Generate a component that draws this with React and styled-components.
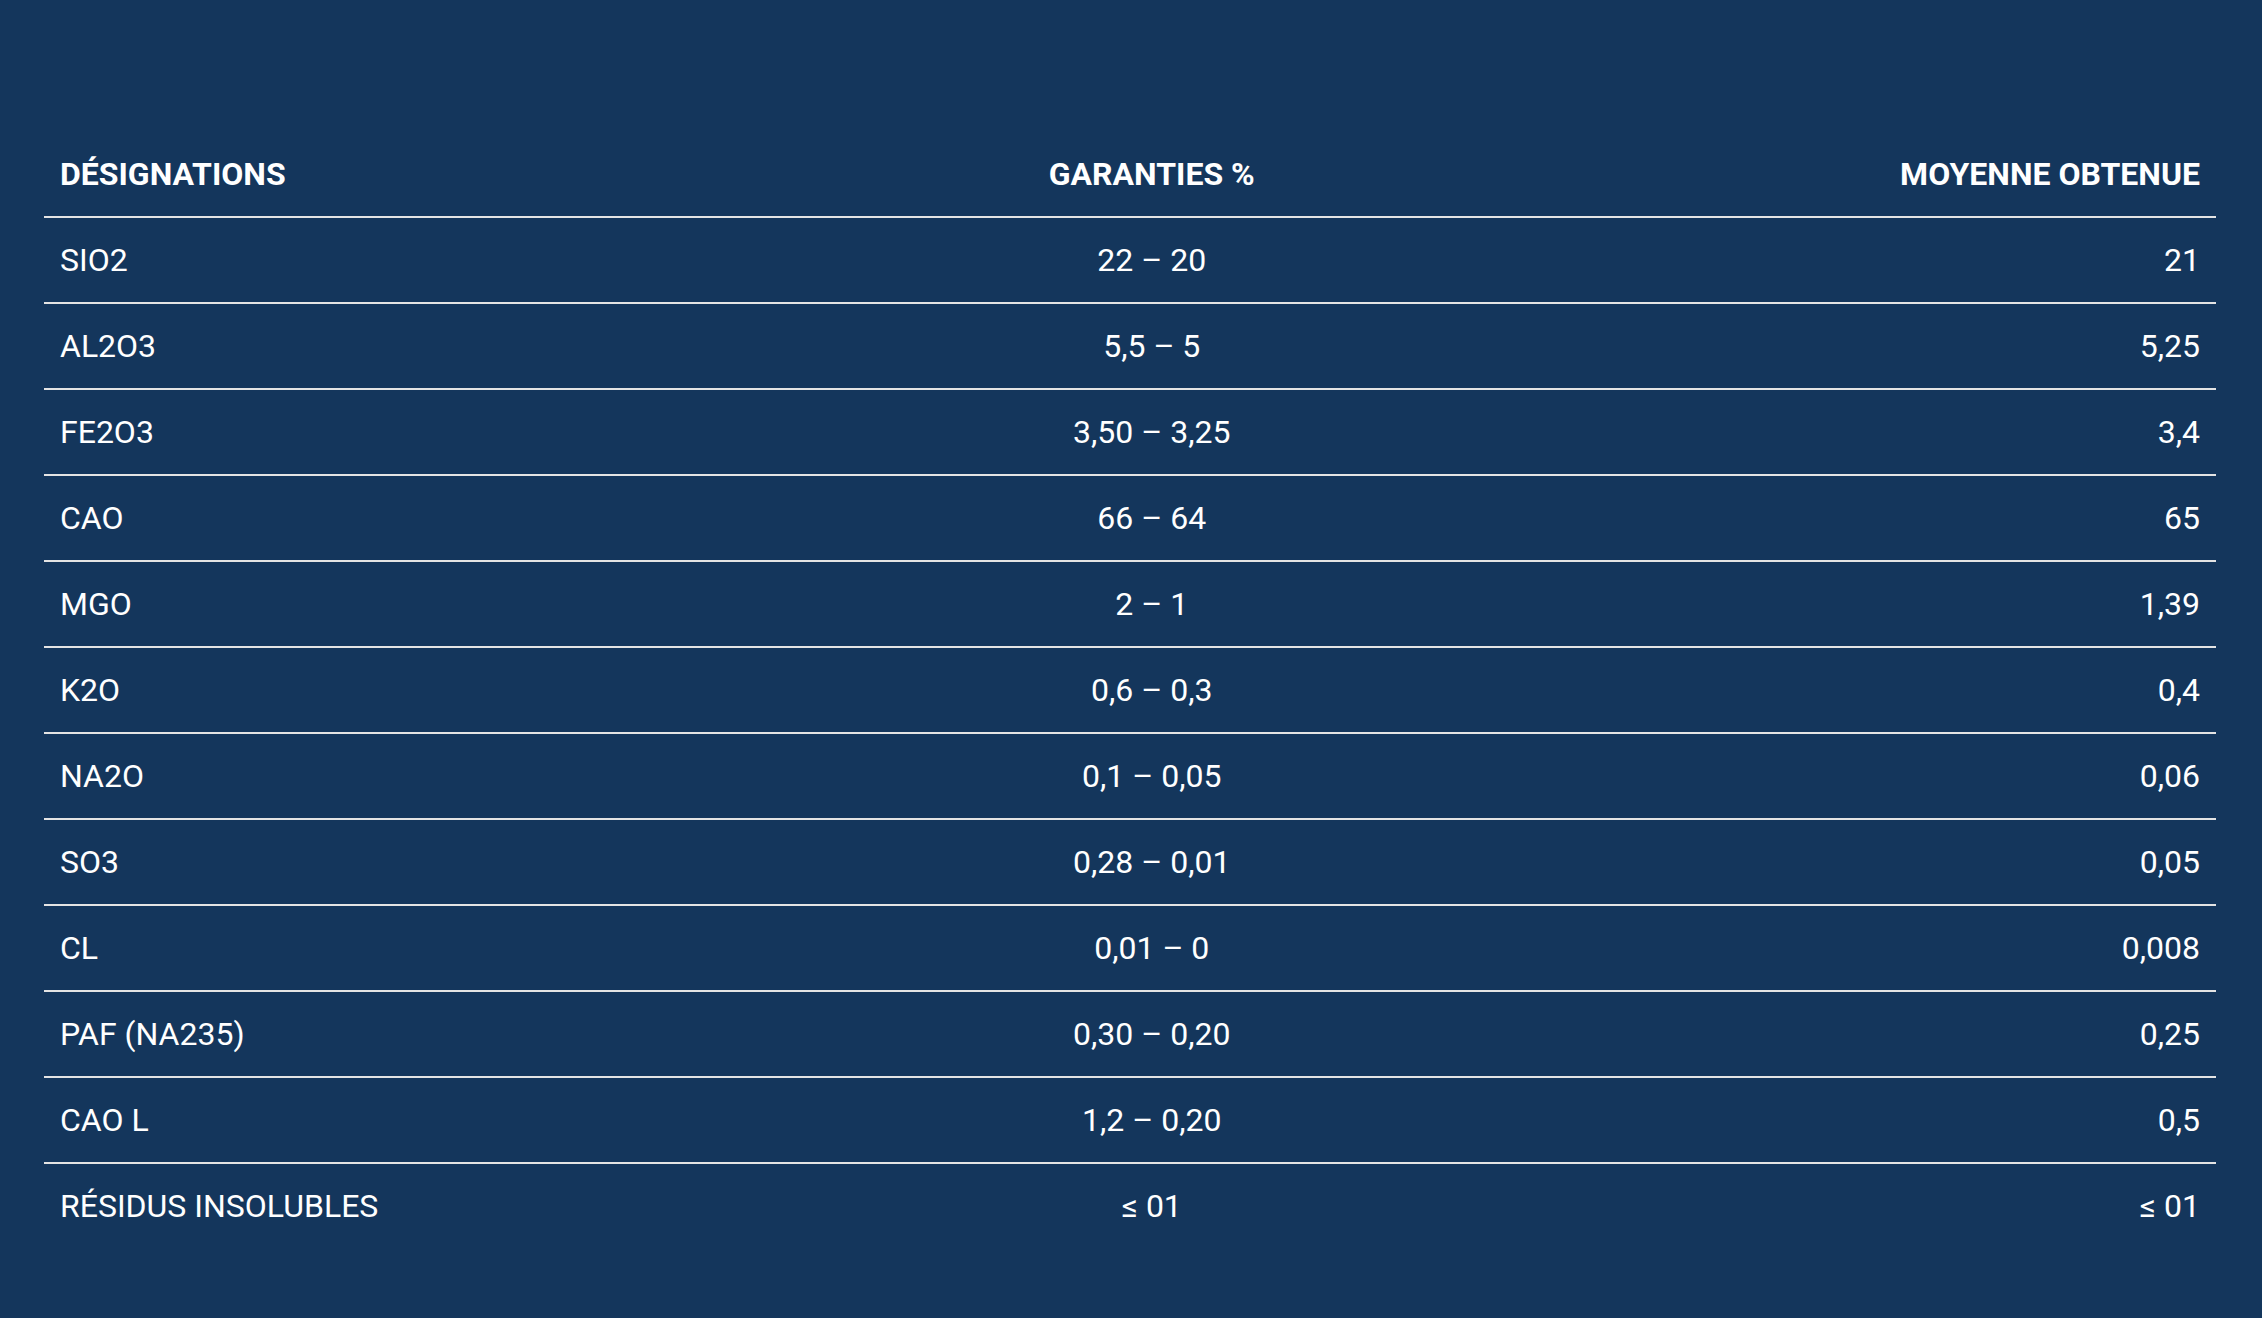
import React from "react";
import styled, { createGlobalStyle } from "styled-components";

const Global = createGlobalStyle`
  html, body { margin: 0; padding: 0; background: #14365c; }
  body { font-family: Roboto, "Liberation Sans", Arial, sans-serif; }
`;

const Page = styled.div`
  min-height: 1318px;
  box-sizing: border-box;
  background: #14365c;
  padding: 132px 46px 68px 44px;
`;

const Table = styled.table`
  width: 100%;
  border-collapse: collapse;
  color: #ffffff;
  font-size: 32px;
  line-height: 45px;
`;

const Row = styled.tr`
  border-bottom: 2px solid ${(p) => (p.$last ? "transparent" : "#e4e4e4")};
`;

const Cell = styled.td`
  padding: 20px 16px 19px;
  text-align: ${(p) => p.$align || "left"};
  font-weight: 400;
  white-space: nowrap;
`;

const Head = styled(Cell).attrs({ as: "th" })`
  font-weight: 700;
`;

const rows = [
  ["SIO2", "22 – 20", "21"],
  ["AL2O3", "5,5 – 5", "5,25"],
  ["FE2O3", "3,50 – 3,25", "3,4"],
  ["CAO", "66 – 64", "65"],
  ["MGO", "2 – 1", "1,39"],
  ["K2O", "0,6 – 0,3", "0,4"],
  ["NA2O", "0,1 – 0,05", "0,06"],
  ["SO3", "0,28 – 0,01", "0,05"],
  ["CL", "0,01 – 0", "0,008"],
  ["PAF (NA235)", "0,30 – 0,20", "0,25"],
  ["CAO L", "1,2 – 0,20", "0,5"],
  ["RÉSIDUS INSOLUBLES", "≤ 01", "≤ 01"],
];

export default function App() {
  return (
    <Page>
      <Global />
      <Table>
        <thead>
          <Row>
            <Head $align="left">DÉSIGNATIONS</Head>
            <Head $align="center">GARANTIES %</Head>
            <Head $align="right">MOYENNE OBTENUE</Head>
          </Row>
        </thead>
        <tbody>
          {rows.map((r, i) => (
            <Row key={r[0]} $last={i === rows.length - 1}>
              <Cell $align="left">{r[0]}</Cell>
              <Cell $align="center">{r[1]}</Cell>
              <Cell $align="right">{r[2]}</Cell>
            </Row>
          ))}
        </tbody>
      </Table>
    </Page>
  );
}
